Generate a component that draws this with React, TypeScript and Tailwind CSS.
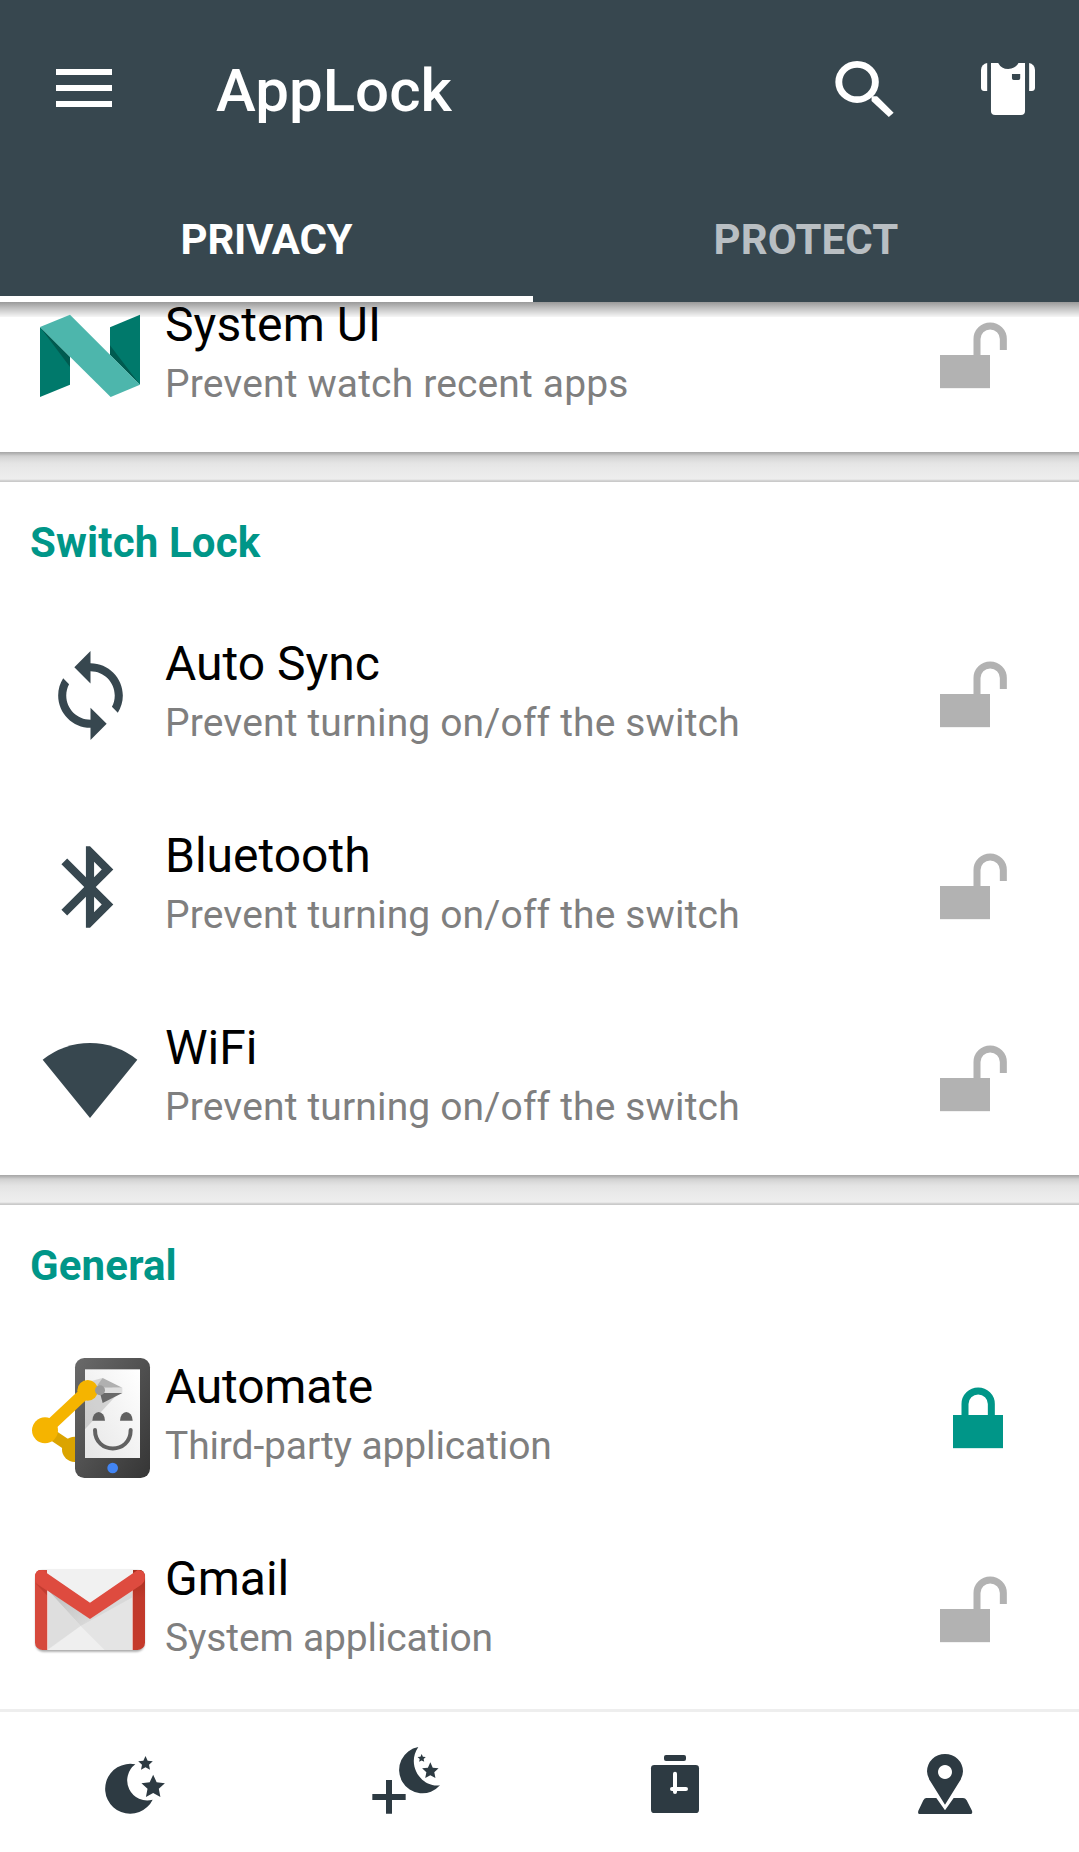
import type { ReactNode } from "react";

const SLATE = "#37474f";
const DARK = "#2d3a42";

function star(cx: number, cy: number, r: number, inner = 0.48) {
  return Array.from({ length: 10 }, (_, i) => {
    const a = -Math.PI / 2 + (i * Math.PI) / 5;
    const d = i % 2 ? r * inner : r;
    return `${(cx + d * Math.cos(a)).toFixed(1)},${(cy + d * Math.sin(a)).toFixed(1)}`;
  }).join(" ");
}

function NougatIcon() {
  return (
    <svg viewBox="90 18 360 360" className="size-[120px]">
      <path d="M120 111L210 201V284L120 321Z" fill="#00796b" />
      <path d="M120 111L210 201V231Z" fill="#005b50" />
      <path d="M330 112L420 74V284L330 194Z" fill="#00796b" />
      <path d="M330 166L420 284L330 194Z" fill="#005b50" />
      <path d="M120 111L210 74L420 284L332 321Z" fill="#4db6ac" />
    </svg>
  );
}

function SyncIcon() {
  return (
    <svg viewBox="0 0 24 24" className="size-[97px]" fill={SLATE}>
      <path d="M12 4V1L8 5l4 4V6c3.31 0 6 2.69 6 6 0 1.01-.25 1.97-.7 2.8l1.46 1.46C19.54 15.03 20 13.57 20 12c0-4.42-3.58-8-8-8zm0 14c-3.31 0-6-2.69-6-6 0-1.01.25-1.97.7-2.8L5.24 7.74C4.46 8.97 4 10.43 4 12c0 4.42 3.58 8 8 8v3l4-4-4-4v3z" />
    </svg>
  );
}

function BluetoothIcon() {
  return (
    <svg viewBox="0 0 24 24" className="size-[98px]" fill={SLATE}>
      <path d="M17.71 7.71L12 2h-1v7.59L6.41 5 5 6.41 10.59 12 5 17.59 6.41 19 11 14.41V22h1l5.71-5.71-4.3-4.29 4.3-4.29zM13 5.83l1.88 1.88L13 9.59V5.83zm1.88 10.46L13 18.17v-3.76l1.88 1.88z" />
    </svg>
  );
}

function WifiIcon() {
  return (
    <svg viewBox="30 57 360 360" className="size-[120px]" fill={SLATE}>
      <path d="M210 354L68 179Q133 129 210 129Q287 129 352 179Z" />
    </svg>
  );
}

function AutomateIcon() {
  return (
    <svg viewBox="30 54 360 360" className="size-[120px] overflow-visible">
      <defs>
        <linearGradient id="body" x1="0" y1="0" x2="1" y2="1">
          <stop offset="0" stopColor="#6a6a6a" />
          <stop offset="1" stopColor="#353535" />
        </linearGradient>
        <linearGradient id="screen" x1="0" y1="1" x2="1" y2="0">
          <stop offset="0" stopColor="#e6e6e6" />
          <stop offset="1" stopColor="#fff" />
        </linearGradient>
      </defs>
      <path d="M75 270L160 327" stroke="#dba400" strokeWidth="32" />
      <circle cx="164" cy="328" r="38" fill="#dba400" />
      <rect x="165" y="54" width="225" height="360" rx="28" fill="url(#body)" />
      <rect x="195" y="88" width="165" height="266" fill="url(#screen)" />
      <path d="M195 128L247 114L295 160L195 268Z" fill="#000" opacity=".13" />
      <path d="M75 271L203 151" stroke="#f5b400" strokeWidth="36" />
      <circle cx="75" cy="271" r="39" fill="#f5b400" />
      <circle cx="203" cy="151" r="31" fill="#f5b400" />
      <path d="M248 114L307 143H254L232 136Z" fill="#b0b0b0" />
      <path d="M247 143H307V159H247Z" fill="#dedede" />
      <path d="M240 159H307L248 189Z" fill="#686868" />
      <circle cx="240" cy="151" r="15" fill="#999" />
      <path d="M217 242A19 26 0 0 1 255 242Z" fill="#616161" />
      <path d="M300 242A19 26 0 0 1 338 242Z" fill="#616161" />
      <path d="M225 270C225 344 332 344 332 270" fill="none" stroke="#616161" strokeWidth="12" strokeLinecap="round" />
      <circle cx="278" cy="384" r="16" fill="#4285f4" />
    </svg>
  );
}

function GmailIcon() {
  return (
    <svg viewBox="30 30 360 360" className="size-[120px]">
      <defs>
        <linearGradient id="right" x1="0" y1="0" x2="0" y2="1">
          <stop offset="0" stopColor="#a5301f" />
          <stop offset=".35" stopColor="#c0392b" />
          <stop offset="1" stopColor="#c53a2b" />
        </linearGradient>
        <linearGradient id="flap" x1="0" y1="0" x2="1" y2="1">
          <stop offset="0" stopColor="#bdbdbd" />
          <stop offset="1" stopColor="#dadada" />
        </linearGradient>
        <filter id="soft" x="-10%" y="-10%" width="120%" height="130%">
          <feGaussianBlur stdDeviation="3" />
        </filter>
        <clipPath id="envelope">
          <rect x="45" y="87" width="330" height="243" rx="22" />
        </clipPath>
      </defs>
      <rect x="47" y="92" width="326" height="243" rx="22" fill="#000" opacity=".35" filter="url(#soft)" />
      <g clipPath="url(#envelope)">
        <rect x="65" y="87" width="290" height="243" fill="#f1f1f1" />
        <path d="M83 150L210 236L338 150V330H83Z" fill="#e4e4e4" />
        <path d="M83 150L210 236L182 258Z" fill="url(#flap)" />
        <path d="M83 150L182 258L83 328Z" fill="#dedede" />
        <path d="M210 236L338 150V172L182 258Z" fill="#000" opacity=".05" />
        <path d="M83 330L182 258L254 330Z" fill="#efefef" />
        <path d="M45 90H81V330H45Z" fill="#d6493c" />
        <path d="M81 150H84V330H81Z" fill="#eec4c0" />
        <path d="M336 150H339V330H336Z" fill="#e8b4ae" />
        <path d="M339 90H375V330H339Z" fill="url(#right)" />
        <path d="M45 128L81 152V166Z" fill="#c23d31" />
      </g>
      <path d="M45 112Q45 90 67 90L210 188L353 90Q375 90 375 112Q375 126 364 134L210 237L56 134Q45 126 45 112Z" fill="#de4b3f" />
    </svg>
  );
}

function LockIcon({ locked = false }: { locked?: boolean }) {
  return locked ? (
    <svg viewBox="90 39 270 270" className="size-[90px]">
      <rect x="159" y="165" width="150" height="99.5" fill="#009688" />
      <path d="M195 168V132A39.5 39 0 0 1 274 132V168" fill="none" stroke="#009688" strokeWidth="21" />
    </svg>
  ) : (
    <svg viewBox="390 63 270 270" className="size-[90px]">
      <rect x="420" y="195" width="150" height="99.5" fill="#b2b2b2" />
      <path d="M531 198V147A39.5 39 0 0 1 610 147V180" fill="none" stroke="#b2b2b2" strokeWidth="21" />
    </svg>
  );
}

type RowProps = {
  icon: ReactNode;
  title: string;
  note: string;
  locked?: boolean;
  titleClass?: string;
  noteClass?: string;
};

function Row({ icon, title, note, locked, titleClass = "", noteClass = "tracking-[0.15px]" }: RowProps) {
  return (
    <div className="flex h-[192px] shrink-0 items-center pr-[59px] pl-[30px]">
      <div className="flex size-[120px] items-center justify-center">{icon}</div>
      <div className="ml-[15px] flex-1 whitespace-nowrap">
        <div className={`text-[48px] leading-[56px] text-black ${titleClass}`}>{title}</div>
        <div className={`text-[39px] leading-[62px] text-[#7f7f7f] ${noteClass}`}>{note}</div>
      </div>
      <LockIcon locked={locked} />
    </div>
  );
}

function Heading({ children }: { children: ReactNode }) {
  return (
    <h2 className="h-[117px] pt-[36px] pl-[30px] text-[42px] leading-[49px] font-bold tracking-[0.15px] text-[#009688]">
      {children}
    </h2>
  );
}

function Gap() {
  return (
    <div className="h-[30px] bg-[linear-gradient(to_bottom,#a6a6a6_0px,#b8b8b8_2px,#d0d0d0_4px,#dadada_7px,#e4e4e4_11px,#e9e9e9_17px,#eeeeee_27px,#dedede_28px,#c8c8c8_29px,#cccccc_30px)]" />
  );
}

function MoonStars() {
  return (
    <svg viewBox="90 111 270 270" className="size-[90px]" fill={DARK}>
      <path d="M226 193A75 75 0 1 0 278 299A60 60 0 0 1 226 193Z" />
      <polygon points={star(256.5, 191, 23)} />
      <polygon points={star(279.5, 261, 37)} />
    </svg>
  );
}

function AddMoon() {
  return (
    <svg viewBox="900 111 270 270" className="size-[90px]" fill={DARK}>
      <path d="M1075 141A70 70 0 1 0 1140 256C1085 264 1037 196 1075 141Z" />
      <polygon points={star(1085, 175, 13)} />
      <polygon points={star(1111, 213, 26)} />
      <path d="M978 240h18v42h41v18h-41v41h-18v-41h-41v-18h41z" />
    </svg>
  );
}

function ClockIcon() {
  return (
    <svg viewBox="30 111 270 270" className="size-[90px]" fill={DARK}>
      <rect x="132" y="165" width="66" height="18" rx="6" />
      <rect x="93" y="195" width="144" height="144" rx="10" />
      <path d="M165 221V276M156 267H198" stroke="#fff" strokeWidth="12" strokeLinecap="round" />
    </svg>
  );
}

function PlaceIcon() {
  return (
    <svg viewBox="840 111 270 270" className="size-[90px]" fill={DARK}>
      <path fillRule="evenodd" d="M975 314L931 244Q921 228 921 214A54 52 0 0 1 1029 214Q1029 228 1019 244ZM975 195a21 21 0 1 0 .01 0Z" />
      <path d="M919 294H949L975 331L1001 294H1029Q1036 294 1040 301L1056 332Q1059 342 1050 342H900Q892 342 895 332L910 301Q914 294 919 294Z" />
    </svg>
  );
}

export default function App() {
  return (
    <div className="flex h-[1852px] w-[1079px] flex-col overflow-hidden bg-white font-[Roboto,sans-serif]">
      <header className="flex h-[302px] shrink-0 flex-col bg-[#37474f]">
        <div className="flex h-[176px] items-center pr-[44px] pl-[56px]">
          <div className="flex w-[56px] flex-col gap-[10px]">
            <span className="h-[6px] bg-white" />
            <span className="h-[6px] bg-white" />
            <span className="h-[6px] bg-white" />
          </div>
          <h1 className="ml-[104px] flex-1 pt-[6px] text-[60px] leading-[70px] font-medium text-white">AppLock</h1>
          <svg viewBox="858 183 171 168" preserveAspectRatio="none" className="mr-[87px] mb-[-2px] h-[56px] w-[59px]">
            <ellipse cx="922" cy="246" rx="53" ry="53" fill="none" stroke="#fff" strokeWidth="20" />
            <path d="M964 289H980L1028 338L1014 351L964 303Z" fill="#fff" />
          </svg>
          <svg viewBox="1283 189 157 156" preserveAspectRatio="none" className="mb-[-2px] h-[52px] w-[54px]" fill="#fff">
            <path d="M1301 189V273H1292Q1283 272 1283 263V209Q1285 192 1301 189Z" />
            <path d="M1423 189V273H1431Q1440 272 1440 263V209Q1438 192 1423 189Z" />
            <path fillRule="evenodd" d="M1312 189H1333Q1342 207 1362 207Q1383 207 1392 189H1411V333Q1411 345 1399 345H1324Q1312 345 1312 333ZM1373 222V235Q1373 240 1378 240H1392Q1397 240 1397 235V222Z" />
          </svg>
        </div>
        <nav className="flex flex-1 text-[42px] leading-[49px] font-bold">
          <div className="flex w-[533px] justify-center border-b-[6px] border-white pt-[39px] tracking-[-0.25px] text-white">
            PRIVACY
          </div>
          <div className="flex flex-1 justify-center pt-[39px] tracking-[0.1px] text-[#b9bfc3]">PROTECT</div>
        </nav>
      </header>

      <main className="relative flex-1">
        <div className="absolute inset-x-0 top-0 h-[15px] bg-[linear-gradient(to_bottom,#999999,#c0c0c0_40%,#f6f6f6)]" />
        <section className="relative flex h-[150px] flex-col justify-end">
          <Row
            icon={<NougatIcon />}
            title="System UI"
            note="Prevent watch recent apps"
            titleClass="tracking-[0.1px]"
          />
        </section>
        <Gap />
        <section>
          <Heading>Switch Lock</Heading>
          <Row icon={<SyncIcon />} title="Auto Sync" note="Prevent turning on/off the switch" />
          <Row icon={<BluetoothIcon />} title="Bluetooth" note="Prevent turning on/off the switch" />
          <Row icon={<WifiIcon />} title="WiFi" note="Prevent turning on/off the switch" />
        </section>
        <Gap />
        <section>
          <Heading>General</Heading>
          <Row
            icon={<AutomateIcon />}
            title="Automate"
            note="Third-party application"
            locked
            titleClass="tracking-[-0.2px]"
            noteClass="tracking-[-0.13px]"
          />
          <Row icon={<GmailIcon />} title="Gmail" note="System application" noteClass="tracking-[-0.15px]" />
        </section>
      </main>

      <footer className="flex h-[143px] shrink-0 items-center border-t-[3px] border-[#eeeeee]">
        {[MoonStars, AddMoon, ClockIcon, PlaceIcon].map((Icon, i) => (
          <div key={i} className="flex w-[270px] shrink-0 justify-center">
            <Icon />
          </div>
        ))}
      </footer>
    </div>
  );
}
